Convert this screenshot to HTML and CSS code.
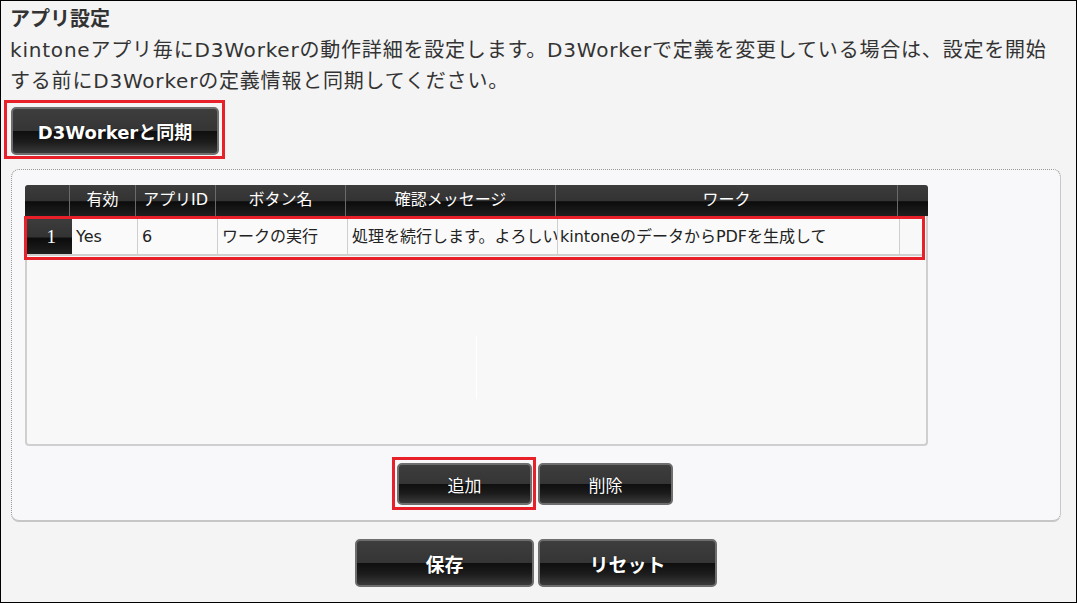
FILE: index.html
```html
<!DOCTYPE html>
<html lang="ja">
<head>
<meta charset="utf-8">
<title>アプリ設定</title>
<link rel="stylesheet" href="styles.css">
</head>
<body>
<div class="page">
  <h1 class="title">アプリ設定</h1>
  <p class="desc">kintoneアプリ毎にD3Workerの動作詳細を設定します。D3Workerで定義を変更している場合は、設定を開始する前にD3Workerの定義情報と同期してください。</p>

  <div class="sync-row">
    <span class="mark mark-sync"><button class="btn btn-sync">D3Workerと同期</button></span>
  </div>

  <section class="panel">
    <div class="grid">
      <div class="grid-head">
        <div class="hc hc-num"></div>
        <div class="hc">有効</div>
        <div class="hc">アプリID</div>
        <div class="hc">ボタン名</div>
        <div class="hc">確認メッセージ</div>
        <div class="hc">ワーク</div>
        <div class="hc hc-end"></div>
      </div>
      <div class="mark mark-row">
        <div class="grid-row">
          <div class="rc rc-num">1</div>
          <div class="rc">Yes</div>
          <div class="rc">6</div>
          <div class="rc">ワークの実行</div>
          <div class="rc">処理を続行します。よろしいですか？</div>
          <div class="rc">kintoneのデータからPDFを生成して</div>
        </div>
      </div>
      <div class="grid-body"><span class="body-line"></span></div>
    </div>

    <div class="panel-actions">
      <span class="mark mark-add"><button class="btn btn-small">追加</button></span>
      <button class="btn btn-small">削除</button>
    </div>
  </section>

  <div class="footer-actions">
    <button class="btn btn-large">保存</button>
    <button class="btn btn-large">リセット</button>
  </div>
</div>
</body>
</html>
```

FILE: styles.css
```css
html, body {
  margin: 0;
  padding: 0;
}

body {
  font-family: "DejaVu Sans", "Noto Sans CJK JP", sans-serif;
  color: #333;
  background: #fff;
}

.page {
  box-sizing: border-box;
  width: 1077px;
  height: 603px;
  border: 1px solid #000;
  background: #f4f4f4;
  padding: 3px 9px 0;
  overflow: hidden;
}

.title {
  margin: 0;
  font-size: 20px;
  line-height: 31px;
  font-weight: bold;
  color: #333;
}

.desc {
  margin: 0;
  font-size: 20px;
  line-height: 31px;
  letter-spacing: 0.8px;
  color: #333;
  width: 1045px;
}

/* red highlight frames */
.mark {
  display: inline-flex;
  border: 3px solid #e8202a;
  box-sizing: border-box;
}

.sync-row {
  margin: 3px 0 0 -6px;
  display: flex;
}

.mark-sync {
  padding: 4px 3px 1px 4px;
}

/* dark glossy buttons */
.btn {
  font-family: "DejaVu Sans", "Noto Sans CJK JP", sans-serif;
  color: #fff;
  border: 2px solid #6e6e6e;
  border-radius: 5px;
  background: linear-gradient(to bottom, #3d3d3d 0%, #353535 50%, #0f0f0f 51%, #1c1c1c 75%, #3a3a3a 100%);
  text-shadow: 0 0 1px #000;
  cursor: pointer;
  padding: 0;
  box-sizing: border-box;
}

.btn-sync {
  width: 208px;
  height: 48px;
  font-size: 18px;
  font-weight: bold;
}

.btn-small {
  width: 135px;
  height: 42px;
  font-size: 17px;
}

.btn-large {
  width: 179px;
  height: 48px;
  font-size: 19px;
  font-weight: bold;
}

/* settings panel */
.panel {
  margin: 10px 0 0 1px;
  width: 1050px;
  height: 353px;
  box-sizing: border-box;
  border: 1px dotted #999;
  border-bottom: 2px solid #c6c6c6;
  border-radius: 8px;
  background: #f8f7f9;
  padding: 15px 0 0 13px;
}

.grid {
  width: 903px;
  height: 261px;
  box-sizing: border-box;
  border: 2px solid #cfcfcf;
  border-top: 0;
  border-radius: 4px;
  background: #f8f8f8;
  display: flex;
  flex-direction: column;
}

.grid-head,
.grid-row {
  display: grid;
  grid-template-columns: 45px 66px 80px 130px 210px 342px 28px;
}

.grid-head {
  height: 31px;
  margin: 0 -2px;
  background: linear-gradient(to bottom, #3c3c3c 0%, #333 50%, #0c0c0c 54%, #1f1f1f 100%);
  border-radius: 3px 3px 0 0;
}

.hc {
  color: #fff;
  font-size: 16px;
  line-height: 30px;
  text-align: center;
  border-right: 1px solid #6a6a6a;
  white-space: nowrap;
  overflow: hidden;
}

.hc-end {
  border-right: 0;
}

.mark-row {
  margin: 0 1px 0 -3px;
  height: 44px;
  display: block;
}

.grid-row {
  grid-template-columns: 45px 66px 80px 130px 210px 342px;
  height: 35px;
  border-bottom: 2px solid #cfcfcf;
}

.rc {
  background: #fafafa;
  font-size: 16px;
  line-height: 35px;
  color: #222;
  padding: 0 4px;
  border-right: 1px solid #cfcfcf;
  white-space: nowrap;
  overflow: hidden;
}

.rc:last-child {
  padding-left: 2px;
}

.rc-num {
  background: linear-gradient(to bottom, #3c3c3c 0%, #333 50%, #0c0c0c 56%, #1f1f1f 100%);
  color: #fff;
  text-align: right;
  font-family: "Liberation Serif", serif;
  font-size: 19px;
  padding-right: 16px;
  border-right: 0;
}

.grid-body {
  flex: 1;
  position: relative;
}

.body-line {
  position: absolute;
  left: 449px;
  top: 76px;
  width: 1px;
  height: 63px;
  background: #fff;
}

/* buttons under the grid sit centred in the panel */
.panel-actions {
  display: flex;
  justify-content: center;
  align-items: flex-start;
  gap: 2px;
  margin: 11px 0 0 -20px;
}

.mark-add {
  padding: 3px 1px 2px 2px;
}

.panel-actions > .btn {
  margin-top: 6px;
}

.footer-actions {
  display: flex;
  justify-content: center;
  gap: 4px;
  width: 1050px;
  margin: 17px 0 0 1px;
}
```
